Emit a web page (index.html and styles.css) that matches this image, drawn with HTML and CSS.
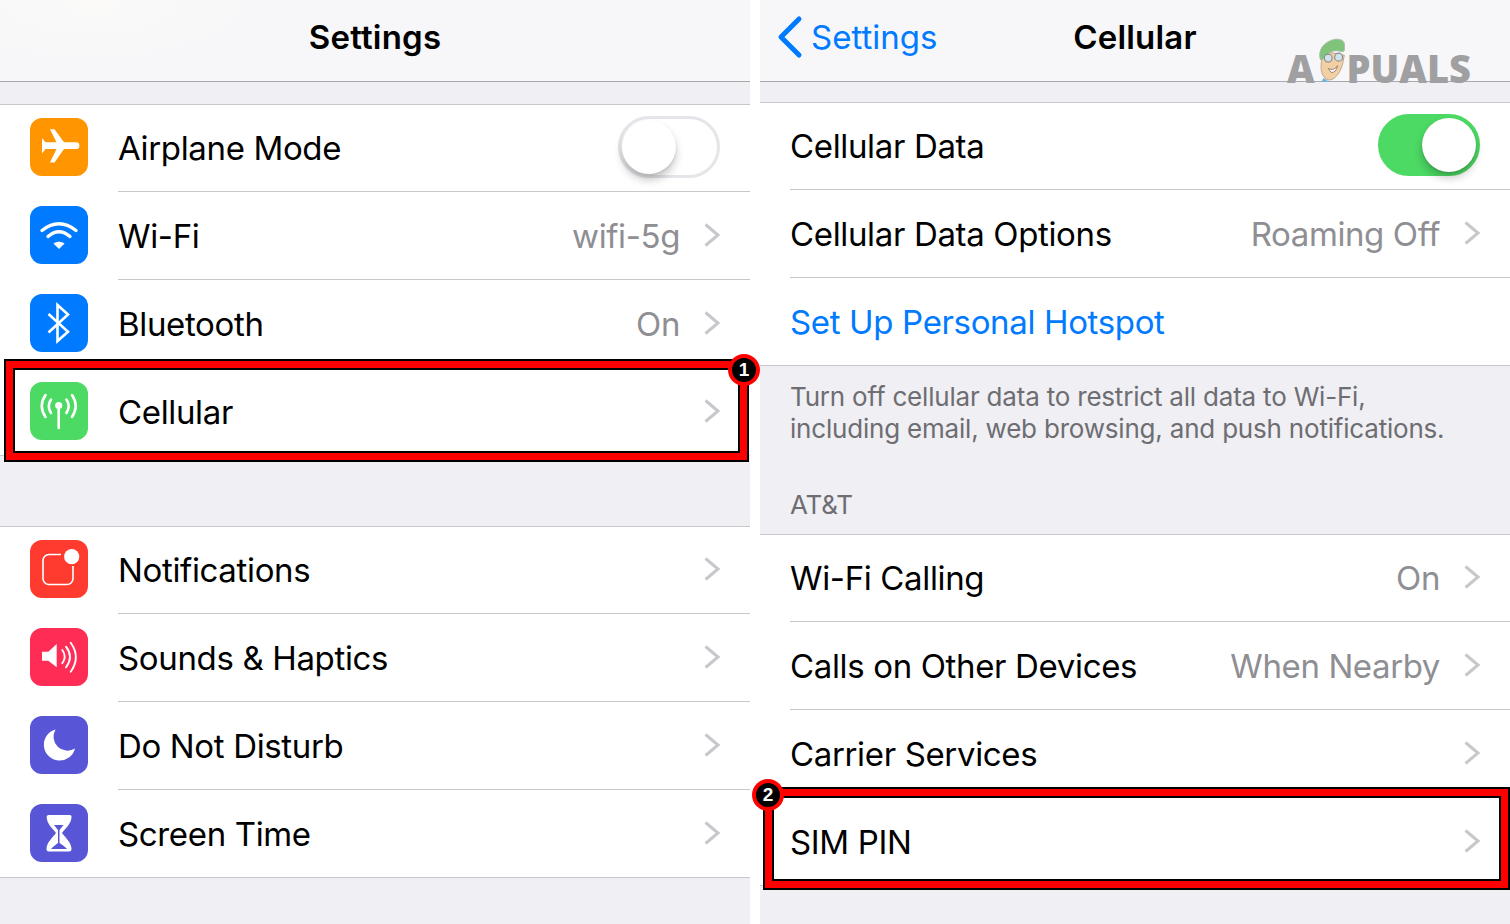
FILE: index.html
```html
<!DOCTYPE html>
<html lang="en">
<head>
    <meta charset="UTF-8">
    <title>Cellular SIM PIN</title>
    <link rel="stylesheet" href="styles.css">
</head>
<body>
    <div class="page">
        <!-- left screen -->
        <section class="panel">
            <div class="nav nav-left"><h1 class="nav-title">Settings</h1></div>
            <div class="group group-first">
                <div class="row">
                    <svg class="row-icon" viewBox="0 0 58 58"><rect width="58" height="58" rx="12" fill="#ff9500"/><path d="M12 20 L15.5 24.3 H26.5 L20 11.3 H24.5 L34 24.3 H46 A3.4 3.4 0 0 1 46 31.1 H34 L24.5 44.5 H20 L26.5 31.1 H15.5 L12 35.5 Z" fill="#fff"/></svg>
                    <div class="row-body">
                        <span class="label">Airplane Mode</span>
                        <span class="toggle"><span class="knob"></span></span>
                    </div>
                </div>
                <div class="row">
                    <svg class="row-icon" viewBox="0 0 58 58"><rect width="58" height="58" rx="12" fill="#007aff"/><path d="M12 24.5 Q29 11 46 24.5 M18 30.5 Q29 21 40 30.5" fill="none" stroke="#fff" stroke-width="3.4" stroke-linecap="round"/><path d="M24 37.5 Q29 34.5 34 37.5 L29 42.5 Z" fill="#fff" stroke="#fff" stroke-linejoin="round"/></svg>
                    <div class="row-body">
                        <span class="label">Wi-Fi</span>
                        <span class="value">wifi-5g</span>
                        <svg class="chev" viewBox="0 0 16 24"><path d="M1.5 1.5 L14 12 L1.5 22.5"/></svg>
                    </div>
                </div>
                <div class="row">
                    <svg class="row-icon" viewBox="0 0 58 58"><rect width="58" height="58" rx="12" fill="#007aff"/><path d="M18.5 20 L38 37.7 L27.5 47 V11 L38 20.5 L18.5 38.5" fill="none" stroke="#fff" stroke-width="2.6"/></svg>
                    <div class="row-body">
                        <span class="label">Bluetooth</span>
                        <span class="value">On</span>
                        <svg class="chev" viewBox="0 0 16 24"><path d="M1.5 1.5 L14 12 L1.5 22.5"/></svg>
                    </div>
                </div>
                <div class="row row-last">
                    <svg class="row-icon" viewBox="0 0 58 58"><rect width="58" height="58" rx="12" fill="#4cd964"/><circle cx="28.7" cy="23.5" r="3.6" fill="#fff"/><path d="M28.7 24 V46 M21 17.5 Q16.5 24 21 31 M15.5 13 Q8 24 15.5 35 M36.4 17.5 Q41 24 36.4 31 M42 13 Q49.4 24 42 35" fill="none" stroke="#fff" stroke-width="2.6" stroke-linecap="round"/></svg>
                    <div class="row-body">
                        <span class="label">Cellular</span>
                        <svg class="chev" viewBox="0 0 16 24"><path d="M1.5 1.5 L14 12 L1.5 22.5"/></svg>
                    </div>
                </div>
            </div>
            <div class="group group-second">
                <div class="row">
                    <svg class="row-icon" viewBox="0 0 58 58"><rect width="58" height="58" rx="12" fill="#ff3b30"/><path d="M31 14.5 H19 a6 6 0 0 0 -6 6 V38.5 a6 6 0 0 0 6 6 H37 a6 6 0 0 0 6 -6 V26" fill="none" stroke="#fff" stroke-width="1.6"/><circle cx="41.7" cy="16.7" r="7.6" fill="#fff"/></svg>
                    <div class="row-body">
                        <span class="label">Notifications</span>
                        <svg class="chev" viewBox="0 0 16 24"><path d="M1.5 1.5 L14 12 L1.5 22.5"/></svg>
                    </div>
                </div>
                <div class="row">
                    <svg class="row-icon" viewBox="0 0 58 58"><rect width="58" height="58" rx="12" fill="#ff2d55"/><path d="M12 23.7 H18.3 L26.7 16 V39.3 L18.3 32.7 H12 Z" fill="#fff"/><path d="M32.3 22 Q37 28.6 32.3 35.3 M36 18.7 Q44 29 36 39.3 M40.7 14.7 Q51 29 40.7 43.7" fill="none" stroke="#fff" stroke-width="1.9" stroke-linecap="round"/></svg>
                    <div class="row-body">
                        <span class="label">Sounds &amp; Haptics</span>
                        <svg class="chev" viewBox="0 0 16 24"><path d="M1.5 1.5 L14 12 L1.5 22.5"/></svg>
                    </div>
                </div>
                <div class="row">
                    <svg class="row-icon" viewBox="0 0 58 58"><rect width="58" height="58" rx="12" fill="#5856d6"/><path d="M25.5 13.5 A15.8 15.8 0 1 0 45 32.5 A14 14 0 0 1 25.5 13.5 Z" fill="#fff"/></svg>
                    <div class="row-body">
                        <span class="label">Do Not Disturb</span>
                        <svg class="chev" viewBox="0 0 16 24"><path d="M1.5 1.5 L14 12 L1.5 22.5"/></svg>
                    </div>
                </div>
                <div class="row row-end">
                    <svg class="row-icon" viewBox="0 0 58 58"><rect width="58" height="58" rx="12" fill="#5856d6"/><path d="M19 11 H39.5 A2 2 0 0 1 41.5 13.3 C41 20 36 24 32 29 C36 34 41.5 39 41.5 45 A2.5 2.5 0 0 1 39 47.5 H19 A2.5 2.5 0 0 1 16.5 45 C16.5 39 22 34 26 29 C22 24 17 20 16.7 13.3 A2 2 0 0 1 19 11 Z" fill="#fff"/><path d="M24 21 H33.5 L29.5 26 V39 C32 40.5 35 42.5 37 45 H21 C23 42.5 26 40.5 28 39 V26 Z" fill="#5856d6"/></svg>
                    <div class="row-body">
                        <span class="label">Screen Time</span>
                        <svg class="chev" viewBox="0 0 16 24"><path d="M1.5 1.5 L14 12 L1.5 22.5"/></svg>
                    </div>
                </div>
            </div>
        </section>

        <!-- right screen -->
        <section class="panel panel-right">
            <div class="nav">
                <div class="nav-back">
                    <svg class="back-chev" viewBox="0 0 26 44"><path d="M22 4 L4 22 L22 40"/></svg>
                    <span>Settings</span>
                </div>
                <h1 class="nav-title">Cellular</h1>
            </div>
            <div class="group group-top">
                <div class="row">
                    <div class="row-body">
                        <span class="label">Cellular Data</span>
                        <span class="toggle toggle-on"><span class="knob"></span></span>
                    </div>
                </div>
                <div class="row">
                    <div class="row-body">
                        <span class="label">Cellular Data Options</span>
                        <span class="value">Roaming Off</span>
                        <svg class="chev" viewBox="0 0 16 24"><path d="M1.5 1.5 L14 12 L1.5 22.5"/></svg>
                    </div>
                </div>
                <div class="row row-last">
                    <div class="row-body">
                        <span class="label label-link">Set Up Personal Hotspot</span>
                    </div>
                </div>
            </div>
            <p class="note">Turn off cellular data to restrict all data to Wi-Fi,<br>including email, web browsing, and push notifications.</p>
            <p class="group-label">AT&amp;T</p>
            <div class="group">
                <div class="row">
                    <div class="row-body">
                        <span class="label">Wi-Fi Calling</span>
                        <span class="value">On</span>
                        <svg class="chev" viewBox="0 0 16 24"><path d="M1.5 1.5 L14 12 L1.5 22.5"/></svg>
                    </div>
                </div>
                <div class="row">
                    <div class="row-body">
                        <span class="label">Calls on Other Devices</span>
                        <span class="value">When Nearby</span>
                        <svg class="chev" viewBox="0 0 16 24"><path d="M1.5 1.5 L14 12 L1.5 22.5"/></svg>
                    </div>
                </div>
                <div class="row">
                    <div class="row-body">
                        <span class="label">Carrier Services</span>
                        <svg class="chev" viewBox="0 0 16 24"><path d="M1.5 1.5 L14 12 L1.5 22.5"/></svg>
                    </div>
                </div>
                <div class="row row-end">
                    <div class="row-body">
                        <span class="label">SIM PIN</span>
                        <svg class="chev" viewBox="0 0 16 24"><path d="M1.5 1.5 L14 12 L1.5 22.5"/></svg>
                    </div>
                </div>
            </div>
        </section>

        <!-- overlays -->
        <div class="mark mark-one"></div>
        <div class="badge badge-one">1</div>
        <div class="mark mark-two"></div>
        <div class="badge badge-two">2</div>

        <div class="logo">
            <span class="logo-a">A</span>
            <svg class="logo-face" viewBox="0 0 38 46">
                <path d="M8 24 C6 34 9 42 15 44 C21 45 27 38 30 28 L32 18 L12 14 Z" fill="#f3cfa4" stroke="#b9a58e" stroke-width="1"/>
                <path d="M7 23 C3 12 12 2 24 1 C30 1 33 4 32 9 C33 13 31 15 29 14 C22 12 16 14 13 18 C11 20 9 23 7 23 Z" fill="#7fc47a" stroke="#a9b8a4" stroke-width="1"/>
                <circle cx="15" cy="21" r="4.2" fill="#cfe3ea" stroke="#8b8b8b" stroke-width="1.2"/>
                <circle cx="26" cy="20" r="4.2" fill="#cfe3ea" stroke="#8b8b8b" stroke-width="1.2"/>
                <path d="M15 32 Q21 35 25 29 Q23 37 18 36 Z" fill="#fff" stroke="#7d6a58" stroke-width="0.8"/>
                <path d="M10 42 L8 46 H16 Z" fill="#6fb4d8"/>
            </svg>
            <span class="logo-rest">PUALS</span>
        </div>
    </div>
</body>
</html>
```
FILE: styles.css
```css
* {
    box-sizing: border-box;
}

body {
    margin: 0;
    background-color: #fff;
    font-family: Inter, "Noto Sans", sans-serif;
    color: #000;
    overflow: hidden;
}

.page {
    position: relative;
    display: flex;
    gap: 10px;
    width: 1510px;
    height: 924px;
    overflow: hidden;
}

.panel {
    width: 750px;
    height: 924px;
    background-color: #efeff4;
}

/* nav bar */
.nav {
    position: relative;
    display: flex;
    align-items: center;
    justify-content: center;
    height: 82px;
    padding-bottom: 7px;
    background-color: #f7f7f9;
    border-bottom: 1px solid #a9a9ad;
}

.nav-left {
    background-image: radial-gradient(ellipse 170px 60px at 90px 5px, #fbfaf9, rgba(251, 250, 249, 0));
}

.nav-title {
    margin: 0;
    font-size: 33px;
    font-weight: 600;
    letter-spacing: 0.2px;
}

.nav-back {
    position: absolute;
    left: 17px;
    top: 15px;
    display: flex;
    align-items: center;
    gap: 8px;
    font-size: 33px;
    color: #007aff;
}

.back-chev {
    width: 26px;
    height: 44px;
    fill: none;
    stroke: #007aff;
    stroke-width: 5;
    stroke-linecap: round;
    stroke-linejoin: round;
}

/* rows */
.group {
    background-color: #fff;
    border-top: 1px solid #c8c7cc;
    border-bottom: 1px solid #c8c7cc;
}

.group-first {
    margin-top: 22px;
}

.group-second {
    margin-top: 70px;
}

.group-top {
    margin-top: 20px;
}

.row {
    display: flex;
    align-items: center;
    height: 88px;
    padding-left: 30px;
}

.row:first-child {
    margin-top: -1px;
}

.panel-right .row {
    padding-left: 31px;
}

.row-last,
.row-end {
    margin-bottom: -1px;
}

.row-icon {
    flex: none;
    width: 58px;
    height: 58px;
    margin-right: 31px;
    margin-bottom: 2px;
}

.row-body {
    display: flex;
    flex: 1;
    align-items: center;
    height: 100%;
    margin-left: -1px;
    padding-right: 30px;
    border-bottom: 1px solid #c8c7cc;
}

.row-last .row-body,
.row-end .row-body {
    border-bottom: none;
}

.label {
    flex: 1;
    font-size: 33px;
    letter-spacing: -0.35px;
}

.label-link {
    color: #007aff;
}

.value {
    margin-right: 24px;
    font-size: 33px;
    letter-spacing: -0.4px;
    color: #8e8e93;
}

.chev {
    flex: none;
    width: 16px;
    height: 24px;
    margin-bottom: 2px;
    fill: none;
    stroke: #c7c7cc;
    stroke-width: 3;
}

/* switches */
.toggle {
    position: relative;
    display: block;
    width: 102px;
    height: 62px;
    margin-bottom: 2px;
    background-color: #fff;
    border: 3px solid #e5e5ea;
    border-radius: 31px;
}

.knob {
    position: absolute;
    left: 1px;
    top: 1px;
    width: 54px;
    height: 54px;
    background-color: #fff;
    border-radius: 50%;
    box-shadow: 0 6px 8px rgba(0, 0, 0, 0.22), 0 1px 2px rgba(0, 0, 0, 0.12);
}

.toggle-on {
    background-color: #4cd964;
    border-color: #4cd964;
}

.toggle-on .knob {
    left: 41px;
}

/* footer text */
.note {
    margin: 0;
    padding: 15px 0 0 30px;
    font-size: 26px;
    line-height: 32px;
    letter-spacing: -0.2px;
    color: #6d6d72;
}

.group-label {
    margin: 0;
    padding: 44px 0 13px 30px;
    font-size: 26px;
    line-height: 32px;
    letter-spacing: -0.2px;
    color: #6d6d72;
}

/* red call-outs */
.mark {
    position: absolute;
    background: transparent;
    border: 7px solid #f00;
    box-shadow: 0 0 0 2px #000, inset 0 0 0 2px #000;
}

.mark-one {
    left: 6px;
    top: 361px;
    width: 741px;
    height: 99px;
}

.mark-two {
    left: 765px;
    top: 789px;
    width: 743px;
    height: 99px;
}

.badge {
    position: absolute;
    display: flex;
    align-items: center;
    justify-content: center;
    width: 32px;
    height: 32px;
    background-color: #000;
    border: 4px solid #f00;
    border-radius: 50%;
    font-family: "Liberation Sans", sans-serif;
    font-size: 19px;
    font-weight: 700;
    color: #fff;
}

.badge-one {
    left: 728px;
    top: 354px;
}

.badge-two {
    left: 752px;
    top: 779px;
}

/* watermark */
.logo {
    position: absolute;
    left: 1287px;
    top: 38px;
    display: flex;
    align-items: flex-end;
    height: 49px;
    font-family: "Open Sans", sans-serif;
    font-size: 38px;
    font-weight: 800;
    line-height: 38px;
    color: #a0a0a2;
}

.logo-face {
    width: 36px;
    height: 44px;
    margin: 0 0 5px -1px;
}

.logo-rest {
    margin-left: -3px;
}
```
